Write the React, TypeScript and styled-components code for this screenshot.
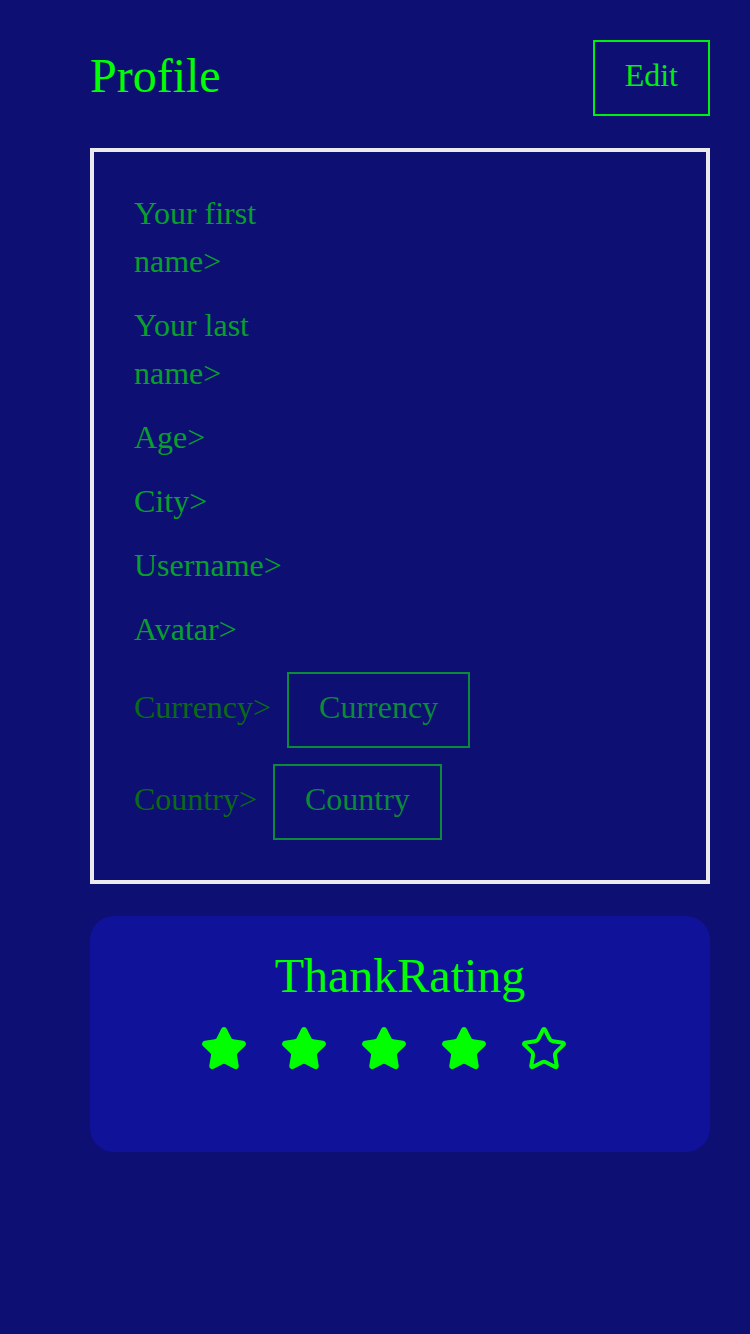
import React from 'react';
import styled, { createGlobalStyle } from 'styled-components';

const GlobalStyle = createGlobalStyle`
  html, body {
    margin: 0;
    padding: 0;
    background-color: #0e0f72;
  }
  body {
    font-family: "Liberation Serif", "Times New Roman", serif;
  }
`;

const Page = styled.div`
  min-height: 1334px;
  box-sizing: border-box;
  padding: 40px 40px 40px 90px;
  background-color: #0e0f72;
  display: flex;
  flex-direction: column;
  gap: 32px;
`;

const Header = styled.div`
  display: flex;
  justify-content: space-between;
  align-items: center;
`;

const Title = styled.h1`
  margin: 0 0 5px;
  font-size: 48px;
  font-weight: 400;
  line-height: normal;
  color: #00ff00;
`;

interface OutlineButtonProps {
  readonly tone: 'bright' | 'dim';
}

const OutlineButton = styled.button<OutlineButtonProps>`
  font-family: inherit;
  font-size: 32px;
  line-height: 48px;
  padding: 9px 30px 15px;
  background: transparent;
  border: 2px solid ${props => (props.tone === 'bright' ? '#00ee10' : '#0a8a3a')};
  color: ${props => (props.tone === 'bright' ? '#00ee10' : '#0a8a3a')};
  cursor: pointer;
`;

const ProfileBox = styled.div`
  border: 4px solid #eaeaef;
  padding: 40px;
  display: flex;
  flex-direction: column;
  gap: 16px;
`;

interface FieldProps {
  readonly muted?: boolean;
}

const Field = styled.div<FieldProps>`
  font-size: 32px;
  line-height: 48px;
  margin: -3px 0 3px;
  color: ${props => (props.muted ? '#0b6a14' : '#07a02c')};
  max-width: 150px;
`;

const SelectRow = styled.div`
  display: flex;
  align-items: center;
  gap: 16px;
`;

const SelectLabel = styled.span`
  font-size: 32px;
  line-height: 48px;
  margin: -3px 0 3px;
  color: #0b6a14;
`;

const RatingCard = styled.div`
  background-color: #10129a;
  border-radius: 24px;
  padding: 32px 0 79px;
  display: flex;
  flex-direction: column;
  align-items: center;
  gap: 22px;
`;

const RatingTitle = styled.h2`
  margin: 0;
  font-size: 48px;
  font-weight: 400;
  line-height: normal;
  color: #00ff00;
`;

const Stars = styled.div`
  display: flex;
`;

const StarSlot = styled.span`
  display: block;
  width: 48px;
  height: 48px;
  margin-right: 32px;
`;

const STAR_PATH =
  'M11.525 2.295a.53.53 0 0 1 .95 0l2.31 4.679a2.123 2.123 0 0 0 1.595 1.16l5.166.756a.53.53 0 0 1 .294.904l-3.736 3.638a2.123 2.123 0 0 0-.611 1.878l.882 5.14a.53.53 0 0 1-.771.56l-4.618-2.428a2.122 2.122 0 0 0-1.973 0L6.396 21.01a.53.53 0 0 1-.77-.56l.881-5.139a2.122 2.122 0 0 0-.611-1.879L2.16 9.795a.53.53 0 0 1 .294-.906l5.165-.755a2.122 2.122 0 0 0 1.597-1.16z';

const Star: React.FC<{ filled: boolean }> = ({ filled }) => (
  <StarSlot>
    <svg width="48" height="48" viewBox="0 0 24 24" fill={filled ? '#00ff00' : 'none'} stroke="#00ff00" strokeWidth="2" strokeLinecap="round" strokeLinejoin="round">
      <path d={STAR_PATH} />
    </svg>
  </StarSlot>
);

const fields = ['Your first name>', 'Your last name>', 'Age>', 'City>', 'Username>', 'Avatar>'];
const rating = 4;

export default function App() {
  return (
    <>
      <GlobalStyle />
      <Page>
        <Header>
          <Title>Profile</Title>
          <OutlineButton tone="bright">Edit</OutlineButton>
        </Header>
        <ProfileBox>
          {fields.map(f => (
            <Field key={f}>{f}</Field>
          ))}
          <SelectRow>
            <SelectLabel>Currency&gt;</SelectLabel>
            <OutlineButton tone="dim">Currency</OutlineButton>
          </SelectRow>
          <SelectRow>
            <SelectLabel>Country&gt;</SelectLabel>
            <OutlineButton tone="dim">Country</OutlineButton>
          </SelectRow>
        </ProfileBox>
        <RatingCard>
          <RatingTitle>ThankRating</RatingTitle>
          <Stars>
            {[0, 1, 2, 3, 4].map(i => (
              <Star key={i} filled={i < rating} />
            ))}
          </Stars>
        </RatingCard>
      </Page>
    </>
  );
}
